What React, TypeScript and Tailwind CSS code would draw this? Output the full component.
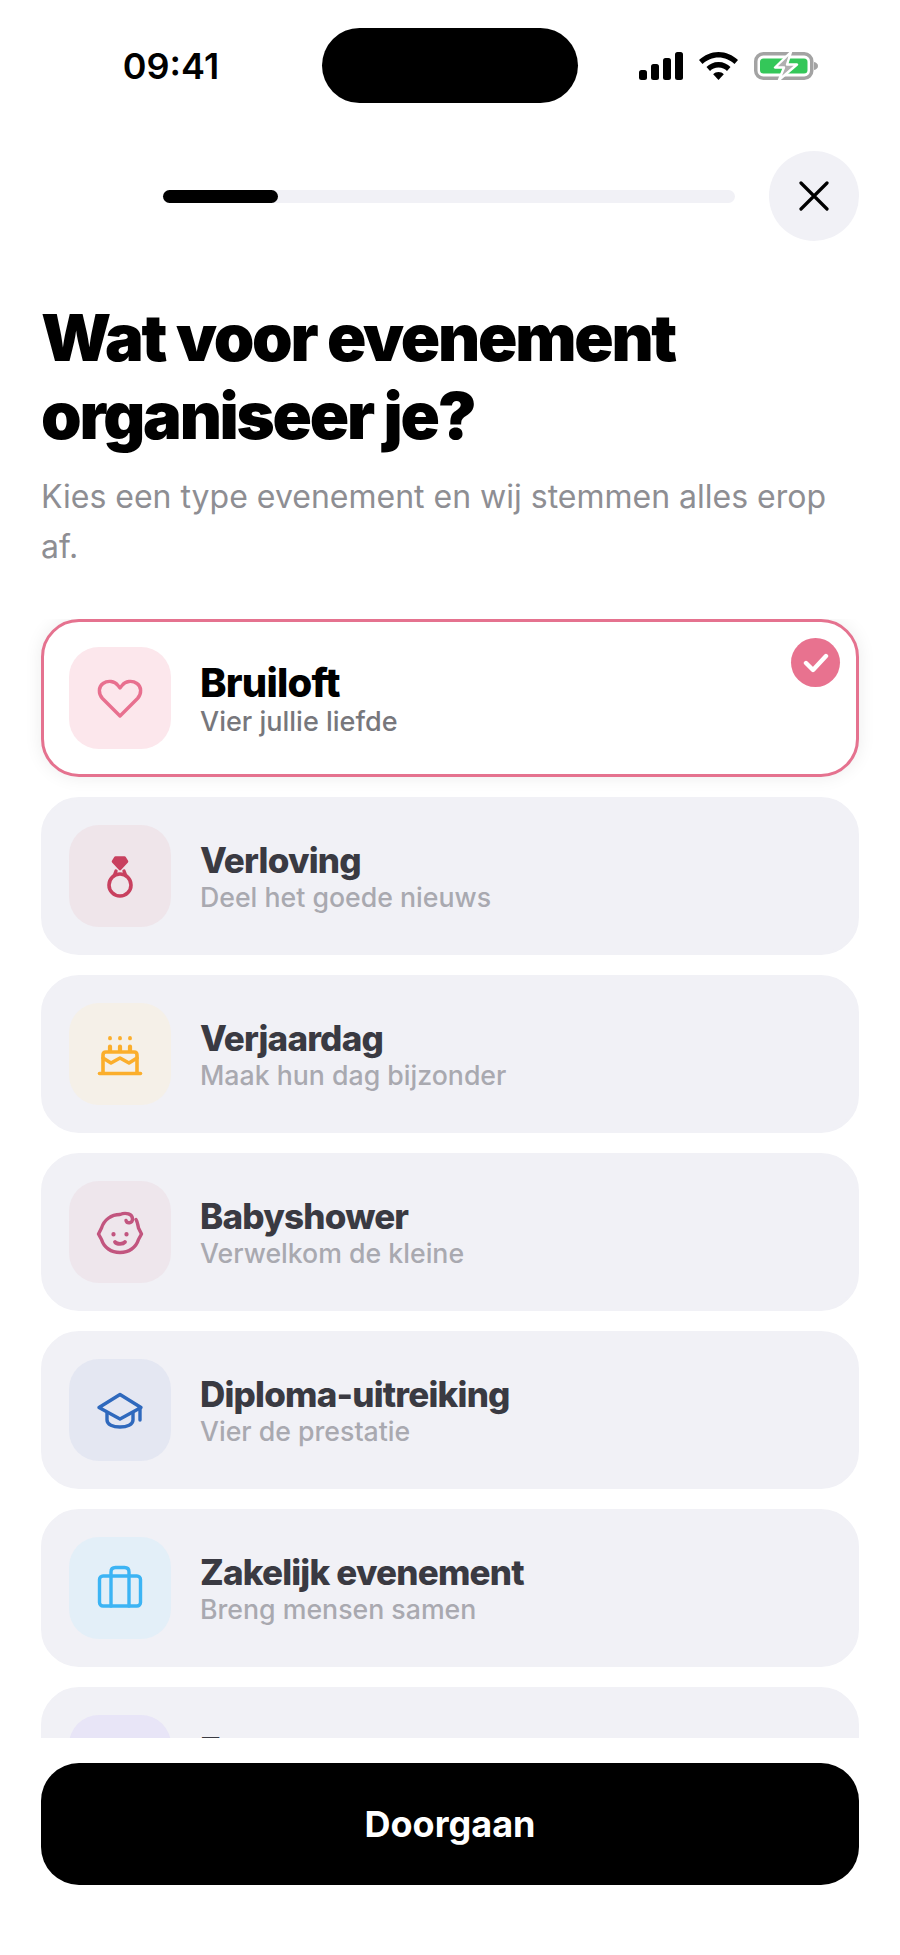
import type { ReactNode } from 'react'

type EventType = {
  title: string
  sub: string
  tile: string
  icon: ReactNode
  selected?: boolean
}

function Glyph({ color, children }: { color: string; children: ReactNode }) {
  return (
    <svg width="48" height="48" viewBox="0 0 48 48" fill="none" stroke={color} strokeWidth="3.4" strokeLinecap="round" strokeLinejoin="round">
      {children}
    </svg>
  )
}

const types: EventType[] = [
  {
    title: 'Bruiloft',
    sub: 'Vier jullie liefde',
    tile: 'bg-[#fce7ec]',
    selected: true,
    icon: (
      <Glyph color="#e8708f">
        <path d="M24 42 L6.5 24.5 C2 19.5 2.5 12.5 7 9.5 C12 6 18.5 7 22 11.5 L24 14 L26 11.5 C29.5 7 36 6 41 9.5 C45.5 12.5 46 19.5 41.5 24.5 Z" />
      </Glyph>
    ),
  },
  {
    title: 'Verloving',
    sub: 'Deel het goede nieuws',
    tile: 'bg-[#efe5ea]',
    icon: (
      <Glyph color="#c8405f">
        <circle cx="24" cy="33" r="11" strokeWidth="3.6" />
        <path d="M17 9.5 L19.5 5.5 H28.5 L31 9.5 L24 17 Z" fill="#c8405f" strokeWidth="2.6" />
        <path d="M18.5 23 L20 19 M29.5 23 L28 19" />
      </Glyph>
    ),
  },
  {
    title: 'Verjaardag',
    sub: 'Maak hun dag bijzonder',
    tile: 'bg-[#f5f0e8]',
    icon: (
      <Glyph color="#fbae2c">
        <path d="M3.5 43.5 H44.5" strokeWidth="3.6" />
        <path d="M7 43 V25 C7 23 8 22 10 22 H38 C40 22 41 23 41 25 V43" strokeWidth="3.6" />
        <path d="M7 28 L15 33 L24 28 L33 33 L41 28" strokeWidth="3.6" />
        <path d="M14 21 V16.5 M24 21 V16.5 M34 21 V16.5" strokeWidth="4.2" />
        <path d="M14 8 V8.4 M24 8 V8.4 M34 8 V8.4" strokeWidth="3.8" />
      </Glyph>
    ),
  },
  {
    title: 'Babyshower',
    sub: 'Verwelkom de kleine',
    tile: 'bg-[#eee6ec]',
    icon: (
      <Glyph color="#c2557f">
        <path d="M40 11.5 C41.5 14 42 17 42.5 20 L45.5 26 L42.5 31.5 C40 39.5 33 44.5 24 44.5 C15 44.5 8 39.5 5.5 31.5 L2.5 26 L5.5 20 C8 12 15 6.5 24 6.5 C30 4 36.5 6 36.5 11 C36.5 15.5 31 16 30 12.5" />
        <path d="M17.5 26 V26.4 M30.5 26 V26.4" strokeWidth="4.2" />
        <path d="M19 34 C21 36.5 27 36.5 29 34" strokeWidth="3.8" />
      </Glyph>
    ),
  },
  {
    title: 'Diploma-uitreiking',
    sub: 'Vier de prestatie',
    tile: 'bg-[#e4e7f2]',
    icon: (
      <Glyph color="#2f69bd">
        <path d="M24 8.5 L3 21.5 L24 33 L45 21.5 Z" />
        <path d="M11 27 V34 C11 38.5 17 41 24 41 C31 41 37 38.5 37 34 V27" />
        <path d="M44 22 V34" />
      </Glyph>
    ),
  },
  {
    title: 'Zakelijk evenement',
    sub: 'Breng mensen samen',
    tile: 'bg-[#e3eff8]',
    icon: (
      <Glyph color="#3cb4f4">
        <rect x="3.5" y="12" width="41" height="30" rx="3.5" />
        <path d="M15 42 V8 C15 5 17 3.5 19.5 3.5 H28.5 C31 3.5 33 5 33 8 V42" />
      </Glyph>
    ),
  },
  {
    title: 'Feest',
    sub: 'Vier het samen',
    tile: 'bg-[#e8e5f7]',
    icon: null,
  },
]

function StatusBar() {
  return (
    <div className="mt-[28px] flex h-[75px] items-center">
      <div className="w-[322px] pl-[20px] text-center text-[36px] font-semibold leading-none text-black">09:41</div>
      <div className="h-[75px] w-[256px] rounded-full bg-black" />
      <div className="flex items-center gap-[16px] pl-[61px]">
        <svg width="44" height="28" viewBox="0 0 44 28" fill="#000">
          <rect x="0" y="18" width="8" height="10" rx="2.5" />
          <rect x="12" y="12" width="8" height="16" rx="2.5" />
          <rect x="24" y="6" width="8" height="22" rx="2.5" />
          <rect x="36" y="0" width="8" height="28" rx="2.5" />
        </svg>
        <svg width="39" height="28" viewBox="0 0 39 28" fill="#000">
          <path d="M19.5 0 C27 0 33.5 3 39 8 L35.5 12 C31 8 25.5 5.5 19.5 5.5 C13.5 5.5 8 8 3.5 12 L0 8 C5.5 3 12 0 19.5 0 Z" />
          <path d="M19.5 10 C24.5 10 28.5 12 31.5 15 L28 19 C26 17 23 15.5 19.5 15.5 C16 15.5 13 17 11 19 L7.5 15 C10.5 12 14.5 10 19.5 10 Z" />
          <path d="M19.5 20 C21.5 20 23.5 20.8 24.8 22.2 L19.5 28 L14.2 22.2 C15.5 20.8 17.5 20 19.5 20 Z" />
        </svg>
        <svg width="64" height="28" viewBox="0 0 64 28" fill="none">
          <rect x="1.75" y="1.75" width="56" height="24.5" rx="7.5" stroke="#a3a3a3" strokeWidth="3.5" />
          <rect x="6" y="6.5" width="47.5" height="15" rx="3.5" fill="#34c759" />
          <path d="M60 10 C62.5 10.5 64 12 64 14 C64 16 62.5 17.5 60 18 Z" fill="#a3a3a3" />
          <path d="M37 0 L21 15.5 H30 L25 28 L43 12.5 H33 Z" fill="#b0b0b0" stroke="#fff" strokeWidth="2.4" strokeLinejoin="round" />
        </svg>
      </div>
    </div>
  )
}

function CloseIcon() {
  return (
    <svg width="30" height="30" viewBox="0 0 30 30" fill="none" stroke="#000" strokeWidth="3.2" strokeLinecap="round">
      <path d="M2 2 L28 28 M28 2 L2 28" />
    </svg>
  )
}

function TypeCard({ item }: { item: EventType }) {
  return (
    <div
      className={`relative flex shrink-0 items-center gap-[29px] rounded-[38px] border-[3px] p-[25px] ${
        item.selected ? 'border-[#e5728f] bg-white shadow-[0_0_18px_rgba(0,0,0,0.08)]' : 'border-[#f1f1f6] bg-[#f1f1f6]'
      }`}
    >
      <div className={`flex h-[102px] w-[102px] items-center justify-center rounded-[30px] ${item.tile}`}>{item.icon}</div>
      {item.selected ? (
        <div className="mt-[6px]">
          <div className="text-[40px] font-extrabold leading-[42px] tracking-[-0.8px] text-black">{item.title}</div>
          <div className="text-[27px] font-medium leading-[36px] text-[#77777c]">{item.sub}</div>
        </div>
      ) : (
        <div className="mt-[1px]">
          <div className="text-[35px] font-extrabold leading-[40px] tracking-[-0.8px] text-[#3a3a42]">{item.title}</div>
          <div className="text-[26.7px] font-medium leading-[34px] text-[#a9a9b0]">{item.sub}</div>
        </div>
      )}
      {item.selected && (
        <div className="absolute right-[16px] top-[16px] flex h-[49px] w-[49px] items-center justify-center rounded-full bg-[#e8728f]">
          <svg width="26" height="22" viewBox="0 0 26 22" fill="none" stroke="#fff" strokeWidth="4.4" strokeLinecap="round" strokeLinejoin="round">
            <path d="M3 11 L10 18 L23 4" />
          </svg>
        </div>
      )}
    </div>
  )
}

export default function App() {
  return (
    <div className="flex h-[1955px] w-[900px] flex-col overflow-hidden bg-white font-['Inter',sans-serif]">
      <StatusBar />

      <div className="mt-[48px] flex items-center pl-[163px] pr-[41px]">
        <div className="h-[13px] w-[572px] rounded-full bg-[#f1f1f6]">
          <div className="h-[13px] w-[115px] rounded-full bg-black" />
        </div>
        <div className="ml-[34px] flex h-[90px] w-[90px] items-center justify-center rounded-full bg-[#f1f1f6]">
          <CloseIcon />
        </div>
      </div>

      <div className="px-[41px]">
        <h1 className="mt-[58px] text-[65px] font-black leading-[78px] tracking-[-2.25px] text-black">
          Wat voor evenement
          <br />
          organiseer je?
        </h1>
        <p className="mt-[17px] text-[32px] leading-[50px] text-[#8e8e93]">Kies een type evenement en wij stemmen alles erop af.</p>
      </div>

      <div className="mt-[47px] flex min-h-0 flex-1 flex-col gap-[20px] overflow-hidden px-[41px]">
        {types.map((item) => (
          <TypeCard key={item.title} item={item} />
        ))}
      </div>

      <div className="px-[41px] pb-[70px] pt-[25px]">
        <button className="flex h-[122px] w-full items-center justify-center rounded-[38px] bg-black text-[36px] font-bold text-white">
          Doorgaan
        </button>
      </div>
    </div>
  )
}
